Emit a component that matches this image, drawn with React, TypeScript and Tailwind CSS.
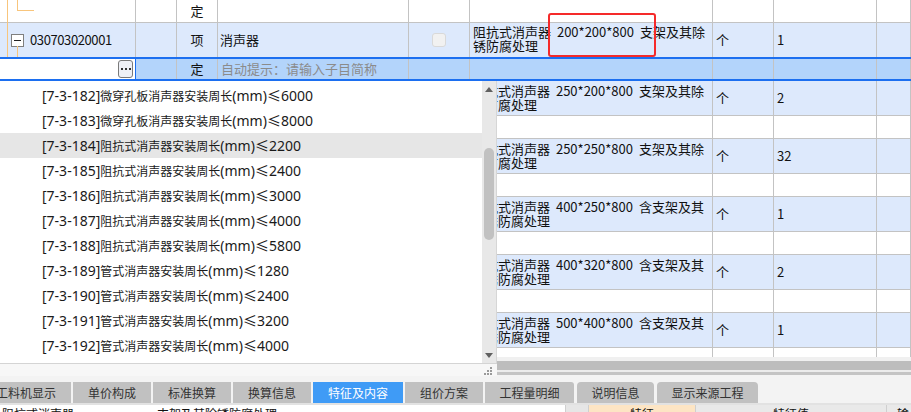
import React from "react";

const CJK = /[\u3000-\u9fff\uff00-\uffef]/;

function splitRuns(text: string) {
  const out: { t: string; cjk: boolean }[] = [];
  for (const ch of text) {
    const c = CJK.test(ch);
    const last = out[out.length - 1];
    if (last && last.cjk === c) last.t += ch;
    else out.push({ t: ch, cjk: c });
  }
  return out;
}

function ListText({ text }: { text: string }) {
  return (
    <span className="whitespace-nowrap text-[#1a1a1a]">
      {splitRuns(text).map((r, i) =>
        r.cjk ? (
          <span key={i} className="text-[12px] font-['Noto_Sans_CJK_SC',sans-serif]">
            {r.t}
          </span>
        ) : (
          <span key={i} className="text-[14px] font-['Noto_Sans','Noto_Sans_CJK_SC',sans-serif]">
            {r.t}
          </span>
        )
      )}
    </span>
  );
}

function GridText({ text, track = "tracking-[0px]" }: { text: string; track?: string }) {
  return (
    <span className="whitespace-pre">
      {splitRuns(text).map((r, i) =>
        r.cjk ? (
          <span key={i}>{r.t}</span>
        ) : (
          <span key={i} className={track + " [word-spacing:3px]"}>
            {r.t}
          </span>
        )
      )}
    </span>
  );
}

type DataRow = { blue: boolean; lines?: string[]; unit?: string; qty?: string };

const rows: DataRow[] = [
  { blue: true, lines: ["阻抗式消声器 250*200*800 支架及其除", "锈防腐处理"], unit: "个", qty: "2" },
  { blue: false },
  { blue: true, lines: ["阻抗式消声器 250*250*800 支架及其除", "锈防腐处理"], unit: "个", qty: "32" },
  { blue: false },
  { blue: true, lines: ["阻抗式消声器 400*250*800 含支架及其", "除锈防腐处理"], unit: "个", qty: "1" },
  { blue: false },
  { blue: true, lines: ["阻抗式消声器 400*320*800 含支架及其", "除锈防腐处理"], unit: "个", qty: "2" },
  { blue: false },
  { blue: true, lines: ["阻抗式消声器 500*400*800 含支架及其", "除锈防腐处理"], unit: "个", qty: "1" },
  { blue: false },
];

const items = [
  "[7-3-182]微穿孔板消声器安装周长(mm)≤6000",
  "[7-3-183]微穿孔板消声器安装周长(mm)≤8000",
  "[7-3-184]阻抗式消声器安装周长(mm)≤2200",
  "[7-3-185]阻抗式消声器安装周长(mm)≤2400",
  "[7-3-186]阻抗式消声器安装周长(mm)≤3000",
  "[7-3-187]阻抗式消声器安装周长(mm)≤4000",
  "[7-3-188]阻抗式消声器安装周长(mm)≤5800",
  "[7-3-189]管式消声器安装周长(mm)≤1280",
  "[7-3-190]管式消声器安装周长(mm)≤2400",
  "[7-3-191]管式消声器安装周长(mm)≤3200",
  "[7-3-192]管式消声器安装周长(mm)≤4000",
];

const L = "border-r border-[#c3c3c3]";

function Lines({ lines }: { lines: string[] }) {
  return (
    <div className="flex flex-col leading-[14px]">
      {lines.map((l, i) => (
        <div key={i} className="h-[14px]">
          <GridText text={l} />
        </div>
      ))}
    </div>
  );
}

function Tab({ label, cls, active }: { label: string; cls: string; active?: boolean }) {
  return (
    <div
      className={
        cls +
        " h-[21px] shrink-0 flex items-center justify-center text-[12px] " +
        (active ? "bg-[#3f9bf6] text-white" : "bg-[#c1c1c1] text-[#333]")
      }
    >
      {label}
    </div>
  );
}

export default function App() {
  return (
    <div className="relative w-[911px] h-[412px] overflow-hidden bg-white font-['Noto_Sans_CJK_SC',sans-serif] text-[13px] text-[#111]">
      {/* main grid */}
      <div className="relative h-[357px] overflow-hidden flex flex-col">
        {/* row 0 */}
        <div className="flex h-[23px] shrink-0 border-b border-[#c3c3c3] bg-white">
          <div className={"w-[136px] " + L} />
          <div className={"w-[41px] " + L} />
          <div className={"w-[41px] flex items-center justify-center " + L}>定</div>
          <div className={"w-[191px] " + L} />
          <div className={"w-[61px] " + L} />
          <div className={"w-[243px] " + L} />
          <div className={"w-[61px] " + L} />
          <div className={"w-[103px] " + L} />
          <div className={"w-[34px] " + L} />
        </div>
        {/* row 1 */}
        <div className="flex h-[34px] shrink-0 bg-[#dde9fc]">
          <div className={"w-[136px] flex items-center pl-[11px] " + L}>
            <div className="w-[13px] h-[13px] border border-[#7f7f7f] bg-white flex items-center justify-center">
              <div className="w-[7px] h-[1px] bg-[#222]" />
            </div>
            <span className="ml-[6px]">
              <GridText text="030703020001" track="tracking-[-0.4px]" />
            </span>
          </div>
          <div className={"w-[41px] " + L} />
          <div className={"w-[41px] flex items-center justify-center " + L}>项</div>
          <div className={"w-[191px] flex items-center pl-[2px] " + L}>消声器</div>
          <div className={"w-[61px] flex items-center justify-center " + L}>
            <div className="w-[14px] h-[14px] rounded-[3px] border border-[#d9d9d9] bg-[#f1f1f1]" />
          </div>
          <div className={"w-[243px] flex items-center pl-[3px] pb-[3px] " + L}>
            <Lines lines={["阻抗式消声器 200*200*800 支架及其除", "锈防腐处理"]} />
          </div>
          <div className={"w-[61px] flex items-center pl-[3px] " + L}>个</div>
          <div className={"w-[103px] flex items-center pl-[3px] " + L}>
            <GridText text="1" />
          </div>
          <div className={"w-[34px] " + L} />
        </div>
        {/* row 2 editing */}
        <div className="flex h-[24px] shrink-0 border-y-2 border-[#1c6ff0] bg-[#b3d4fb]">
          <div className="w-[136px] bg-white border-r border-[#1c6ff0] flex items-center justify-end pr-[2px]">
            <div className="w-[15px] h-[18px] rounded-[3px] border border-[#7a7a7a] bg-[#eef0f6] flex items-center justify-center gap-[2px]">
              <div className="w-[2px] h-[2px] bg-[#333]" />
              <div className="w-[2px] h-[2px] bg-[#333]" />
              <div className="w-[2px] h-[2px] bg-[#333]" />
            </div>
          </div>
          <div className={"w-[41px] " + L} />
          <div className={"w-[41px] flex items-center justify-center " + L}>定</div>
          <div className={"w-[191px] flex items-center pl-[3px] text-[#8b8b8b] " + L}>自动提示：请输入子目简称</div>
          <div className={"w-[61px] " + L} />
          <div className={"w-[243px] " + L} />
          <div className={"w-[61px] " + L} />
          <div className={"w-[103px] " + L} />
          <div className={"w-[34px] " + L} />
        </div>
        {rows.map((r, i) => (
          <div
            key={i}
            className={
              "flex shrink-0 border-b border-[#c3c3c3] " +
              (r.blue ? "h-[35px] bg-[#dde9fc]" : "h-[23px] bg-white")
            }
          >
            <div className={"w-[136px] " + L} />
            <div className={"w-[41px] " + L} />
            <div className={"w-[41px] " + L} />
            <div className={"w-[191px] " + L} />
            <div className={"w-[61px] " + L} />
            <div className={"w-[243px] flex items-center pl-[2px] " + L}>{r.lines && <Lines lines={r.lines} />}</div>
            <div className={"w-[61px] flex items-center pl-[3px] " + L}>{r.unit}</div>
            <div className={"w-[103px] flex items-center pl-[3px] " + L}>{r.qty && <GridText text={r.qty} />}</div>
            <div className={"w-[34px] " + L} />
          </div>
        ))}
        {/* tree lines */}
        <svg className="absolute left-0 top-0 pointer-events-none" width="40" height="57" viewBox="0 0 40 57">
          <line x1="7.5" y1="0" x2="7.5" y2="57" stroke="#f8c57c" strokeWidth="1" />
          <line x1="17.5" y1="0" x2="17.5" y2="10.5" stroke="#f8c57c" strokeWidth="1" />
          <line x1="17" y1="10.5" x2="34" y2="10.5" stroke="#f8c57c" strokeWidth="1" />
          <line x1="17.5" y1="46" x2="17.5" y2="57" stroke="#f8c57c" strokeWidth="1" />
        </svg>
        {/* red annotation box */}
        <div className="absolute left-[548px] top-[13px] w-[108px] h-[44px] border-2 border-[#f52a2a] rounded-[3px]" />
      </div>

      {/* lower bars */}
      <div className="h-[4px] bg-[#f0f0f0]" />
      <div className="h-[9px] bg-[#bdbdbd]" />
      <div className="h-[2px] bg-[#ececec]" />
      <div className="h-[3px] bg-[#c4c4c4]" />
      <div className="h-[7px] bg-[#f3f3f3]" />
      {/* tabs */}
      <div className="h-[21px] bg-[#f3f3f3] flex">
        <Tab label="工料机显示" cls="w-[90px] -ml-[19px] mr-[2px]" />
        <Tab label="单价构成" cls="w-[78px] mr-[2px]" />
        <Tab label="标准换算" cls="w-[78px] mr-[2px]" />
        <Tab label="换算信息" cls="w-[78px] mr-[2px]" />
        <Tab label="特征及内容" cls="w-[90px] mr-[2px]" active />
        <Tab label="组价方案" cls="w-[78px] mr-[2px]" />
        <Tab label="工程量明细" cls="w-[89px] mr-[3px] rounded-tr-[3px]" />
        <Tab label="说明信息" cls="w-[77px] mr-[3px] rounded-t-[4px]" />
        <Tab label="显示来源工程" cls="w-[101px] rounded-t-[4px]" />
      </div>
      <div className="h-[2px] bg-[#e2e2e2]" />
      {/* bottom panel (cut) */}
      <div className="h-[7px] flex overflow-hidden text-[12px] leading-[13px]">
        <div className="w-[565px] bg-white flex pt-[2px]">
          <span className="ml-[2px]">阻抗式消声器</span>
          <span className="ml-[83px]">支架及其除锈防腐处理</span>
        </div>
        <div className="w-[24px] bg-[#e6e6e6] border-x border-[#cfcfcf]" />
        <div className="w-[106px] bg-[#fde5c4] flex justify-center pt-[2px]">特征</div>
        <div className="w-[191px] bg-[#e9e9e9] border-l border-[#cfcfcf] flex justify-center pt-[2px]">特征值</div>
        <div className="flex-1 bg-[#e9e9e9] border-l border-[#cfcfcf] pt-[2px] pl-[10px]">输出</div>
      </div>

      {/* dropdown list overlay */}
      <div className="absolute left-0 top-[81px] w-[497px] h-[295px] bg-white flex flex-col">
        <div className="flex h-[282px]">
          <div className="w-[482px] pt-[2px] flex flex-col">
            {items.map((t, i) => (
              <div key={t} className={"h-[25px] shrink-0 flex items-center pl-[42px] " + (i === 2 ? "bg-[#e6e6e6]" : "")}>
                <ListText text={t} />
              </div>
            ))}
          </div>
          <div className="w-[15px] bg-[#e8e8e8] border-r border-[#d6d6d6] flex flex-col items-center">
            <div className="h-[16px] shrink-0 flex items-center justify-center">
              <svg width="8" height="5" viewBox="0 0 8 5">
                <polygon points="0,5 8,5 4,0" fill="#606060" />
              </svg>
            </div>
            <div className="mt-[51px] w-[10px] h-[92px] shrink-0 rounded-full bg-[#c1c1c1]" />
            <div className="flex-1" />
            <div className="h-[16px] shrink-0 flex items-center justify-center">
              <svg width="8" height="5" viewBox="0 0 8 5">
                <polygon points="0,0 8,0 4,5" fill="#606060" />
              </svg>
            </div>
          </div>
        </div>
        <div className="flex-1 border-t border-[#d4d4d4] bg-[#f7f7f7] flex justify-end items-end pr-[5px] pb-[1px]">
          <svg width="9" height="9" viewBox="0 0 9 9">
            <rect x="7" y="1" width="2" height="2" fill="#9a9a9a" />
            <rect x="7" y="4" width="2" height="2" fill="#9a9a9a" />
            <rect x="4" y="4" width="2" height="2" fill="#9a9a9a" />
            <rect x="7" y="7" width="2" height="2" fill="#9a9a9a" />
            <rect x="4" y="7" width="2" height="2" fill="#9a9a9a" />
            <rect x="1" y="7" width="2" height="2" fill="#9a9a9a" />
          </svg>
        </div>
      </div>
    </div>
  );
}
